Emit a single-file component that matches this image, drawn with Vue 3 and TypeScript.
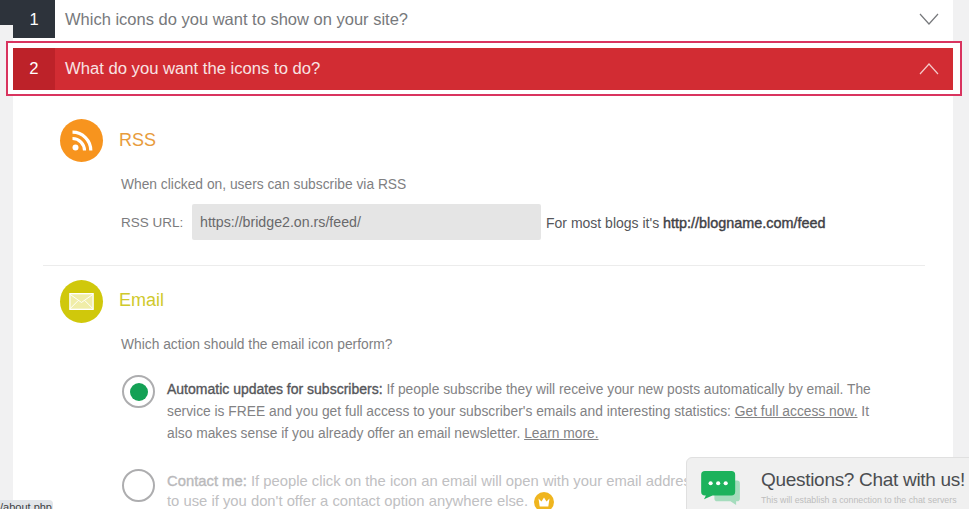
<script setup lang="ts">
const stepOne = 'Which icons do you want to show on your site?'
const stepTwo = 'What do you want the icons to do?'
</script>

<template>
  <div class="page">
    <div class="corner"></div>
    <main class="panel">
      <header class="step">
        <span class="num num-dark">1</span>
        <span class="step-title">{{ stepOne }}</span>
        <svg class="chev" viewBox="0 0 20 12" width="20" height="12"><path d="M1 1l9 10 9-10" fill="none" stroke="#77797c" stroke-width="1.2" /></svg>
      </header>

      <div class="focus">
        <header class="step step-open">
          <span class="num num-red">2</span>
          <span class="step-title">{{ stepTwo }}</span>
          <svg class="chev" viewBox="0 0 20 12" width="20" height="12"><path d="M1 11l9-10 9 10" fill="none" stroke="#f4c9c9" stroke-width="1.2" /></svg>
        </header>
      </div>

      <section class="block block-rss">
        <div class="head">
          <span class="badge badge-rss">
            <svg viewBox="0 0 24 24" width="24" height="24">
              <circle cx="5.500" cy="18.500" r="3" fill="#fff" />
              <path d="M2.500 9.500a12 12 0 0 1 12 12" fill="none" stroke="#fff" stroke-width="3.200" />
              <path d="M2.500 3.200a18.300 18.300 0 0 1 18.300 18.300" fill="none" stroke="#fff" stroke-width="3.200" />
            </svg>
          </span>
          <h2 class="title title-rss">RSS</h2>
        </div>
        <p class="desc first">When clicked on, users can subscribe via RSS</p>
        <div class="url-row">
          <label class="url-label">RSS URL:</label>
          <div class="url-input">https://bridge2.on.rs/feed/</div>
          <span class="url-hint">For most blogs it's <b>http://blogname.com/feed</b></span>
        </div>
      </section>

      <section class="block block-email">
        <div class="head">
          <span class="badge badge-email">
            <svg viewBox="0 0 26 18" width="25" height="17">
              <rect x="0.700" y="0.700" width="24.600" height="16.600" fill="#f0eda8" stroke="#fff" stroke-width="1.400" />
              <path d="M1 1.500l12 8.500 12-8.500M1 16.500l8.500-8.500M25 16.500l-8.500-8.500" fill="none" stroke="#fff" stroke-width="1" />
            </svg>
          </span>
          <h2 class="title title-email">Email</h2>
        </div>
        <p class="desc second">Which action should the email icon perform?</p>

        <div class="option option-on">
          <span class="radio"><span class="dot"></span></span>
          <p class="option-text">
            <b>Automatic updates for subscribers:</b> If people subscribe they will receive your new posts automatically by email. The<br />
            service is FREE and you get full access to your subscriber's emails and interesting statistics: <u>Get full access now.</u> It<br />
            also makes sense if you already offer an email newsletter. <u>Learn more.</u>
          </p>
        </div>

        <div class="option option-off">
          <span class="radio"></span>
          <p class="option-text">
            <b>Contact me:</b> If people click on the icon an email will open with your email address. It makes sense<br />
            to use if you don't offer a contact option anywhere else.
            <svg class="crown" viewBox="0 0 20 20" width="20" height="20">
              <circle cx="10" cy="10" r="10" fill="#efb51f" />
              <path d="M4.500 6.500l3 3 2.500-4 2.500 4 3-3-1.200 8h-8.600z" fill="#fff" />
            </svg>
          </p>
        </div>
      </section>
    </main>

    <aside class="chat">
      <svg class="chat-icon" viewBox="0 0 42 36" width="40" height="34">
        <path d="M14 10h24a3 3 0 0 1 3 3v16a3 3 0 0 1-3 3h-1v4l-6-4H17a3 3 0 0 1-3-3z" fill="#a5dcbd" />
        <path d="M4 0h28a4 4 0 0 1 4 4v18a4 4 0 0 1-4 4H12l-9 4 2-4H4a4 4 0 0 1-4-4V4a4 4 0 0 1 4-4z" fill="#1cb25c" />
        <circle cx="10" cy="13" r="2.200" fill="#fff" /><circle cx="18" cy="13" r="2.200" fill="#fff" /><circle cx="26" cy="13" r="2.200" fill="#fff" />
      </svg>
      <div class="chat-copy">
        <div class="chat-title">Questions? Chat with us!</div>
        <div class="chat-sub">This will establish a connection to the chat servers</div>
      </div>
    </aside>

    <div class="status">/about.php</div>
  </div>
</template>

<style>
html, body { margin: 0; padding: 0; }
</style>

<style scoped>
.page {
  position: relative;
  width: 969px;
  height: 509px;
  overflow: hidden;
  background: #f1f1f2;
  font-family: "Liberation Sans", Arial, sans-serif;
  color: #7b7b7d;
}
.corner {
  position: absolute;
  left: 0;
  top: 0;
  width: 13px;
  height: 25px;
  background: #2d333b;
}
.panel {
  margin-left: 13px;
  width: 940px;
  height: 509px;
  background: #fff;
}
.step {
  display: flex;
  align-items: center;
  height: 38px;
  font-size: 16.500px;
  color: #77797c;
}
.num {
  flex: none;
  width: 42px;
  align-self: stretch;
  display: flex;
  align-items: center;
  justify-content: center;
  color: #fff;
}
.num-dark { background: #2d333b; }
.num-red { background: #bd2229; }
.step-title { margin-left: 10px; flex: 1; }
.chev { margin-right: 14px; }
.focus {
  margin: 3px 0 0 -7px;
  width: 956px;
  height: 55px;
  box-sizing: border-box;
  padding: 5px 7px 4px 5px;
  border: 2px solid #d9345f;
  background: #fff;
}
.step-open {
  height: 42px;
  background: #d22c33;
  color: #f8e3e3;
  font-size: 16.650px;
}
.block { padding-left: 47px; }
.block-rss {
  margin: 23px 28px 0 30px;
  padding-left: 17px;
  padding-bottom: 25px;
  border-bottom: 1px solid #ececec;
}
.block-email {
  margin-top: 14px;
}
.head { display: flex; align-items: center; gap: 16px; }
.badge {
  flex: none;
  width: 43px;
  height: 43px;
  border-radius: 50%;
  display: flex;
  align-items: center;
  justify-content: center;
}
.badge-rss { background: #f7941e; }
.badge-email { background: #d0c80b; }
.title {
  margin: 0;
  font-size: 18px;
  font-weight: 400;
}
.title-rss { color: #e89c3c; }
.title-email { color: #cfc92c; margin-bottom: 2px; }
.desc {
  margin: 0;
  font-size: 13.800px;
  line-height: 16px;
  color: #808082;
}
.first, .second { padding-left: 61px; }
.first { margin-top: 15px; }
.block-email .second { margin-top: 14px; }
.url-row {
  display: flex;
  align-items: center;
  margin: 11px 0 0 61px;
  font-size: 14px;
}
.url-label { width: 71px; font-size: 13.500px; }
.url-input {
  box-sizing: border-box;
  width: 349px;
  height: 36px;
  padding-left: 8px;
  display: flex;
  align-items: center;
  border-radius: 2px;
  background: #e5e5e5;
  color: #69696b;
  font-size: 14.200px;
}
.url-hint { margin-left: 5px; padding-top: 2px; color: #55565a; white-space: nowrap; }
.url-hint b {
  font-weight: 400;
  font-size: 14.400px;
  color: #3f4146;
  -webkit-text-stroke: 0.4px #3f4146;
}
.option {
  display: flex;
  gap: 12px;
  margin-left: 62px;
  white-space: nowrap;
}
.option-on { margin-top: 22px; }
.option-off { margin-top: 24px; }
.radio {
  flex: none;
  box-sizing: border-box;
  width: 33px;
  height: 33px;
  border: 2px solid #adadaf;
  border-radius: 50%;
  display: flex;
  align-items: center;
  justify-content: center;
}
.dot {
  width: 18px;
  height: 18px;
  border-radius: 50%;
  background: #14a155;
}
.option-text {
  margin: 3px 0 0;
  font-size: 13.800px;
  line-height: 22px;
  color: #828284;
}
.option-text b {
  font-weight: 400;
  font-size: 14px;
  color: #55565a;
  -webkit-text-stroke: 0.35px #55565a;
}
.option-off .option-text {
  margin-top: 2px;
  font-size: 14.800px;
  line-height: 20px;
  color: #c0c0c2;
}
.option-off .option-text b { font-size: 14.800px; color: #b9b9bb; -webkit-text-stroke: 0.35px #b9b9bb; }
.crown { vertical-align: -6px; margin-left: 2px; }
.chat {
  position: absolute;
  left: 686px;
  top: 457px;
  width: 300px;
  height: 60px;
  box-sizing: border-box;
  display: flex;
  gap: 20px;
  padding: 10px 0 0 14px;
  background: #f0f0f0;
  border: 1px solid #e0e0e0;
  border-radius: 6px 0 0 0;
}
.chat-icon { margin-top: 3px; flex: none; }
.chat-title {
  font-size: 19px;
  line-height: 24px;
  letter-spacing: -0.300px;
  color: #4b4d50;
  white-space: nowrap;
}
.chat-sub {
  margin-top: 3px;
  font-size: 8.800px;
  line-height: 11px;
  color: #bdbdbd;
  white-space: nowrap;
}
.status {
  position: absolute;
  left: -6px;
  top: 500px;
  width: 59px;
  height: 12px;
  padding: 2px 0 0 6px;
  box-sizing: border-box;
  background: #e2e5e9;
  border-radius: 0 4px 0 0;
  font-size: 11px;
  line-height: 11px;
  color: #3c3f44;
  overflow: hidden;
}
</style>
